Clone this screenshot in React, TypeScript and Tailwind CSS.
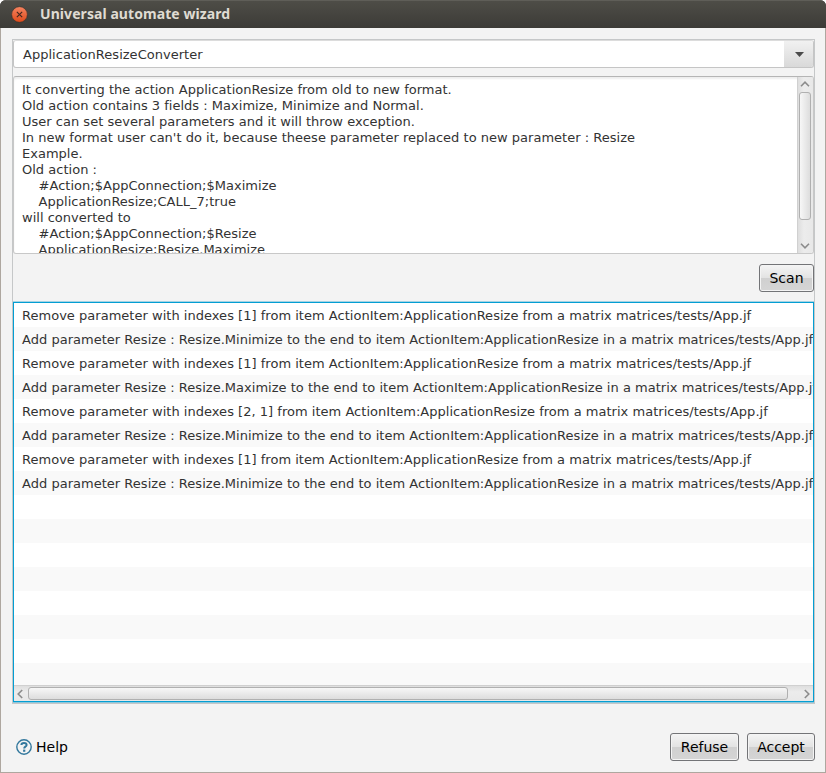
import type { ReactNode } from "react";

const description = [
  "It converting the action ApplicationResize from old to new format.",
  "Old action contains 3 fields : Maximize, Minimize and Normal.",
  "User can set several parameters and it will throw exception.",
  "In new format user can't do it, because theese parameter replaced to new parameter : Resize",
  "Example.",
  "Old action :",
  "    #Action;$AppConnection;$Maximize",
  "    ApplicationResize;CALL_7;true",
  "will converted to",
  "    #Action;$AppConnection;$Resize",
  "    ApplicationResize;Resize.Maximize",
];

const remove = (index: string) =>
  `Remove parameter with indexes [${index}] from item ActionItem:ApplicationResize from a matrix matrices/tests/App.jf`;
const add = (value: string) =>
  `Add parameter Resize : Resize.${value} to the end to item ActionItem:ApplicationResize in a matrix matrices/tests/App.jf`;

const rows = [
  remove("1"),
  add("Minimize"),
  remove("1"),
  add("Maximize"),
  remove("2, 1"),
  add("Minimize"),
  remove("1"),
  add("Minimize"),
  "", "", "", "", "", "", "", "",
];

function Button({ children, className }: { children: ReactNode; className: string }) {
  return (
    <button
      className={`flex h-7 items-center justify-center rounded-[3px] border border-[#737477] bg-[linear-gradient(#f4f4f4,#e3e3e3_49%,#d0d0d0_51%,#d5d5d5)] text-sm text-black shadow-[inset_0_0_0_1px_#f4f4f4] ${className}`}
    >
      {children}
    </button>
  );
}

function Chevron({ className }: { className: string }) {
  return (
    <svg viewBox="0 0 10 6" width="10" height="6" className={className} fill="none" stroke="#8c8c8c" strokeWidth="1.6">
      <path d="M1 5.2 5 1.2 9 5.2" />
    </svg>
  );
}

export default function App() {
  return (
    <div className="h-[773px] w-[826px] overflow-hidden bg-white font-['DejaVu_Sans',sans-serif] text-[13px] text-[#333333]">
      <div className="flex h-full flex-col overflow-hidden rounded-t-[6px] bg-[#3c3b37]">
        <header className="flex h-7 shrink-0 items-center border-t border-[#5f5e58] bg-[linear-gradient(#4e4d47,#3c3b37)] pb-px pl-[11px]">
          <svg width="17" height="17" viewBox="0 0 16 16">
            <defs>
              <linearGradient id="close" x1="0" y1="0" x2="0" y2="1">
                <stop offset="0" stopColor="#f58461" />
                <stop offset="1" stopColor="#df4a1a" />
              </linearGradient>
            </defs>
            <circle cx="8" cy="8" r="7.4" fill="url(#close)" stroke="#37322c" strokeWidth=".6" />
            <path d="m5.5 5.5 5 5m0-5-5 5" stroke="#43281f" strokeWidth="1.1" />
          </svg>
          <h1 className="ml-3 whitespace-nowrap font-['Noto_Sans',sans-serif] text-sm font-bold tracking-[0.07px] text-[#dfdbd2]">
            Universal automate wizard
          </h1>
        </header>

        <div className="flex min-h-0 flex-1 flex-col border-x border-b border-[#aea79f] bg-[#f3f3f3] pt-[11px]">
          <main className="ml-[11px] flex h-[665px] w-[803px] shrink-0 flex-col border border-b-2 border-[#c5c7c8]">
            <div className="flex h-7 shrink-0 rounded-[3px] border border-[#c5c5c5] border-t-[#dcdcdc] bg-white">
              <div className="flex flex-1 items-center pl-[9px] pt-px tracking-[0.02px]">ApplicationResizeConverter</div>
              <div className="flex w-[29px] items-center justify-center rounded-r-[2px] bg-[linear-gradient(#f1f1f1,#d9d9d9)]">
                <svg width="9" height="5" viewBox="0 0 9 5" className="ml-px">
                  <path d="M0 0h9L4.5 5Z" fill="#4b4b4b" />
                </svg>
              </div>
            </div>

            <div className="mt-2 flex h-[178px] shrink-0 overflow-hidden rounded-[3px] border border-[#c8c8c8] border-t-[#b5b5b5] bg-white shadow-[inset_0_2px_2px_#eeeeee]">
              <div className="flex-1 overflow-hidden whitespace-pre pl-2 pt-[5px] leading-4 tracking-[0.014px]">
                {description.map((line, i) => (
                  <div key={i}>{line}</div>
                ))}
              </div>
              <div className="flex w-4 flex-col items-center border-l border-[#d0d0d0] bg-[linear-gradient(90deg,#dedede,#ececec_40%,#e8e8e8)] pb-1 pr-[2px] pt-1">
                <Chevron className="" />
                <div className="mt-[5px] h-[128px] w-3 rounded-[3px] border border-[#b0b0b0] bg-[linear-gradient(90deg,#f7f7f7,#dddddd)]" />
                <div className="flex-1" />
                <Chevron className="rotate-180" />
              </div>
            </div>

            <div className="flex h-12 shrink-0 justify-end pt-[10px]">
              <Button className="w-[55px]">Scan</Button>
            </div>

            <div className="flex h-[400px] shrink-0 flex-col border border-[#039ed3] bg-white shadow-[0_-1px_0_#a6d3e3,0_1px_0_#8cc7dc]">
              <ul className="min-h-0 flex-1 overflow-hidden">
                {rows.map((row, i) => (
                  <li
                    key={i}
                    className="h-6 overflow-hidden whitespace-nowrap pl-2 pt-px leading-6 tracking-[0.022px] odd:bg-white even:bg-[#f9f9f9]"
                  >
                    {row}
                  </li>
                ))}
              </ul>
              <div className="flex h-4 shrink-0 items-center border-t border-[#d0d0d0] bg-[linear-gradient(#dedede,#ececec_40%,#e8e8e8)] pl-px pr-px">
                <Chevron className="-rotate-90" />
                <div className="ml-[3px] h-[13px] w-[760px] rounded-[3px] border border-[#b0b0b0] bg-[linear-gradient(#f7f7f7,#dddddd)]" />
                <Chevron className="ml-auto rotate-90" />
              </div>
            </div>
          </main>

          <footer className="mt-[29px] flex h-7 items-center pl-[15px] pr-[10px] text-sm text-black">
            <svg width="16" height="16" viewBox="0 0 16 16" fill="none" stroke="#33789d">
              <circle cx="8" cy="8" r="7.2" strokeWidth="1.4" />
              <path d="M5.4 6C5.4 3.4 10.6 3.4 10.6 6c0 1.8-2.4 1.6-2.4 3.4" strokeWidth="2" />
              <path d="M8.2 10.6v2.2" strokeWidth="2.2" />
            </svg>
            <span className="ml-1 flex-1">Help</span>
            <Button className="w-[69px]">Refuse</Button>
            <Button className="ml-2 w-[68px]">Accept</Button>
          </footer>
        </div>
      </div>
    </div>
  );
}
